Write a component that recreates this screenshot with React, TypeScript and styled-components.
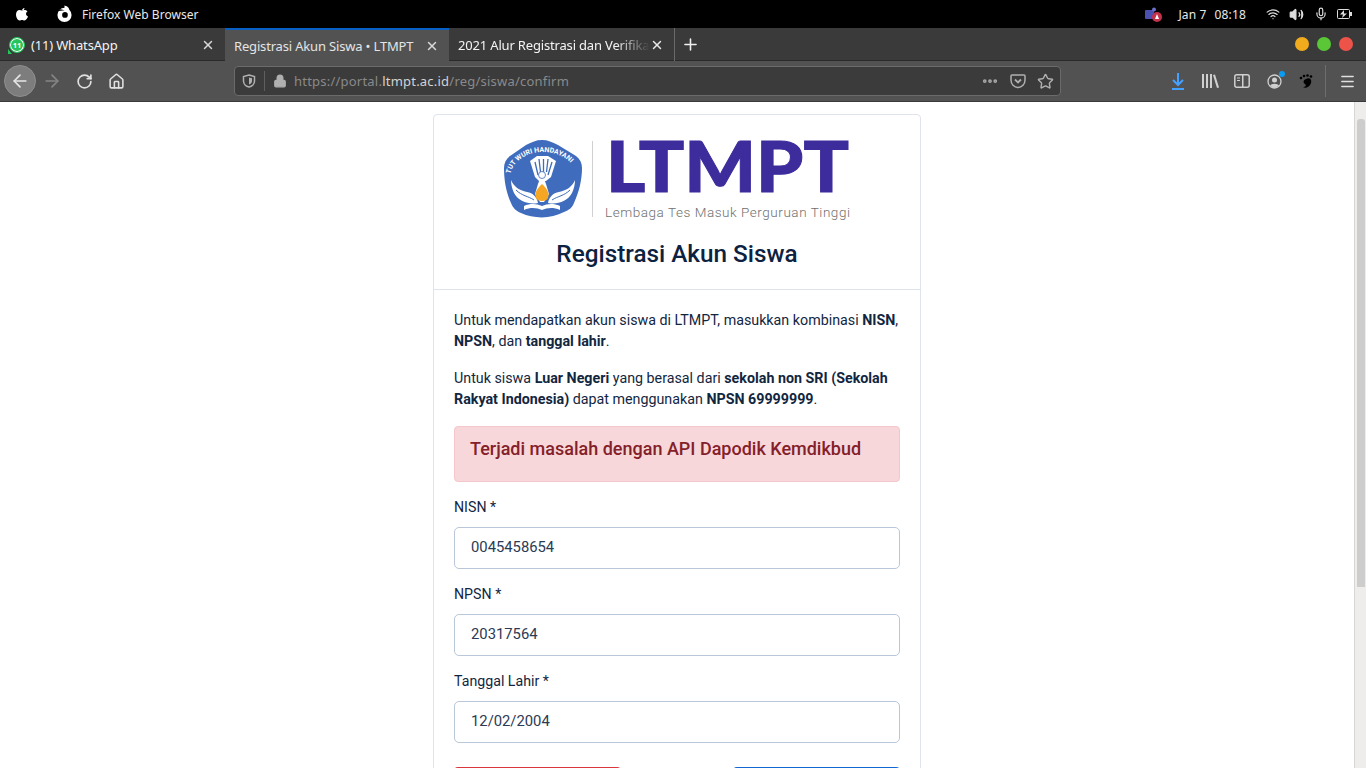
import styled, { createGlobalStyle } from "styled-components";
import {
  ArrowLeft,
  ArrowRight,
  Ellipsis,
  Home,
  Lock,
  Menu,
  Mic,
  Plus,
  RotateCw,
  Star,
  Volume2,
  Wifi,
  X,
} from "lucide-react";

const UI_FONT = `"Noto Sans", "Open Sans", sans-serif`;
const PAGE_FONT = `Roboto, "Liberation Sans", sans-serif`;

const GlobalStyle = createGlobalStyle`
  html, body {
    margin: 0;
    height: 100%;
    overflow: hidden;
    background: #fff;
  }
  * { box-sizing: border-box; }
`;

const Screen = styled.div`
  width: 1366px;
  height: 768px;
  display: flex;
  flex-direction: column;
  overflow: hidden;
`;

const SystemBar = styled.div`
  height: 28px;
  background: #000;
  color: #e8e8e8;
  display: flex;
  align-items: center;
  padding: 0 14px 0 16px;
  font: 12px ${UI_FONT};
  flex: none;
`;

const AppName = styled.span`
  margin-left: 9px;
  letter-spacing: 0.02px;
`;

const FirefoxMark = styled.svg`
  margin-left: 28px;
`;

const Tray = styled.div`
  margin-left: auto;
  display: flex;
  align-items: center;
`;

const Clock = styled.span`
  display: flex;
  gap: 8px;
  margin: 0 19.5px 0 16px;
  letter-spacing: 0.15px;
  white-space: nowrap;
`;

const TrayIcons = styled.div`
  display: flex;
  align-items: center;
  gap: 9.5px;
`;

const TabBar = styled.div`
  height: 33px;
  background: #3a3a3a;
  border-bottom: 1px solid #2a2a2a;
  display: flex;
  flex: none;
  color: #f0f0f0;
  font: 13px ${UI_FONT};
`;

const Tab = styled.div<{ $active?: boolean; $width: number }>`
  width: ${({ $width }) => $width}px;
  height: 33px;
  display: flex;
  align-items: center;
  padding: 0 10px 0 9px;
  background: ${({ $active }) => ($active ? "#525252" : "transparent")};
  border-top: ${({ $active }) => ($active ? "2px solid #0a5fc4" : "0")};
  color: ${({ $active }) => ($active ? "#e4e4e4" : "#f4f4f4")};
`;

const TabTitle = styled.span<{ $faded?: boolean }>`
  flex: 1;
  white-space: nowrap;
  overflow: hidden;
  letter-spacing: -0.17px;
  ${({ $faded }) =>
    $faded &&
    `-webkit-mask-image: linear-gradient(to right, #000 82%, transparent 100%);`}
`;

const WhatsAppIcon = styled.div`
  position: relative;
  width: 16px;
  height: 16px;
  margin-right: 6px;
  border-radius: 50%;
  background: #25c45c;
  border: 1.5px solid #25c45c;
  box-shadow: inset 0 0 0 1px #fff;
  display: flex;
  align-items: center;
  justify-content: center;
  color: #fff;
  font: 700 7.5px ${UI_FONT};
  &::after {
    content: "";
    position: absolute;
    left: -2px;
    bottom: -2px;
    border-top: 5px solid transparent;
    border-left: 4px solid #25c45c;
  }
`;

const TabDivider = styled.div`
  width: 1px;
  height: 33px;
  background: #6a6a6a;
`;

const NewTab = styled.div`
  width: 30px;
  height: 33px;
  display: flex;
  align-items: center;
  justify-content: center;
`;

const WindowButtons = styled.div`
  margin-left: auto;
  display: flex;
  align-items: center;
  gap: 8px;
  padding-right: 13px;
`;

const WindowDot = styled.span<{ $color: string }>`
  width: 14px;
  height: 14px;
  border-radius: 50%;
  background: ${({ $color }) => $color};
`;

const NavBar = styled.div`
  height: 41px;
  background: #525252;
  border-bottom: 1px solid #3a3a3a;
  display: flex;
  align-items: center;
  padding-left: 4px;
  flex: none;
`;

const BackButton = styled.div`
  width: 32px;
  height: 32px;
  border-radius: 50%;
  background: #7d7d7d;
  border: 1px solid #8e8e8e;
  display: flex;
  align-items: center;
  justify-content: center;
`;

const NavButton = styled.div`
  width: 32px;
  height: 32px;
  display: flex;
  align-items: center;
  justify-content: center;
  position: relative;
`;

const UrlBar = styled.div`
  width: 827px;
  height: 30px;
  margin-left: 102px;
  background: #3b3b3b;
  border: 1px solid #6b6b6b;
  border-radius: 4px;
  display: flex;
  align-items: center;
  padding: 0 6px 0 7px;
  font: 13px ${UI_FONT};
  color: #8a8a8a;
`;

const UrlSeparator = styled.span`
  width: 1px;
  height: 20px;
  background: #5f5f5f;
  margin: 0 8px;
`;

const UrlText = styled.span`
  margin-left: 7px;
  flex: 1;
  letter-spacing: 0.22px;
  b {
    font-weight: 400;
    color: #d4d4d4;
  }
`;

const UrlActions = styled.div`
  display: flex;
  align-items: center;
  gap: 11px;
`;

const ToolArea = styled.div`
  margin-left: 101px;
  display: flex;
  align-items: center;
`;

const ToolDivider = styled.span`
  width: 1px;
  height: 32px;
  background: #6e6e6e;
  margin: 0 5px 0 3px;
`;

const Notification = styled.span`
  position: absolute;
  top: 6px;
  right: 5px;
  width: 6px;
  height: 6px;
  border-radius: 50%;
  background: #0a9cf0;
`;

const Viewport = styled.div`
  flex: 1;
  min-height: 0;
  display: flex;
  background: #fff;
  overflow: hidden;
`;

const Page = styled.div`
  flex: 1;
  min-width: 0;
  display: flex;
  justify-content: center;
  padding: 12px 0 0 0;
`;

const Scrollbar = styled.div`
  width: 12px;
  background: #eeedec;
  border-left: 1px solid #d8d6d4;
  padding: 17px 1px 0 2px;
  flex: none;
`;

const ScrollThumb = styled.div`
  height: 468px;
  background: #cdcdcd;
  border-radius: 3px 3px 0 0;
`;

const Card = styled.div`
  width: 488px;
  height: max-content;
  background: #fff;
  border: 1px solid #dfe3ec;
  border-radius: 4px;
  color: #12263f;
  font: 14.28px/21px ${PAGE_FONT};
`;

const CardHeader = styled.div`
  height: 175px;
  border-bottom: 1px solid #dfe3ec;
  display: flex;
  flex-direction: column;
  align-items: center;
  padding-top: 25px;
`;

const Logo = styled.svg`
  display: block;
  margin-left: 1px;
`;

const CardTitle = styled.h1`
  margin: 18px 0 0;
  font: 500 24.3px/32px ${PAGE_FONT};
  color: #0d2240;
`;

const CardBody = styled.div`
  padding: 20px 20px 0;
`;

const Paragraph = styled.p`
  margin: 0 0 16px;
  color: #12263f;
  b {
    font-weight: 700;
  }
`;

const Alert = styled.div`
  height: 56px;
  margin: 16px 0 15px;
  padding: 10px 15px;
  background: #f8d7da;
  border: 1px solid #f5c6cb;
  border-radius: 4px;
  color: #842029;
  font: 500 18px/24px ${PAGE_FONT};
`;

const Field = styled.div`
  margin-bottom: 15px;
`;

const FieldLabel = styled.label`
  display: block;
  height: 21px;
  margin-bottom: 9px;
  color: #12263f;
  font-size: 14.2px;
`;

const FieldBox = styled.div`
  height: 42px;
  padding: 0 16px 2px;
  background: #fff;
  border: 1px solid #b9c7d8;
  border-radius: 5px;
  display: flex;
  align-items: center;
  color: #2b3a55;
  font-size: 14.8px;
`;

const Actions = styled.div`
  display: flex;
  justify-content: space-between;
  margin-top: 24px;
`;

const ActionButton = styled.div<{ $color: string }>`
  width: 167px;
  height: 40px;
  border-radius: 4px;
  background: ${({ $color }) => $color};
`;

function EmblemLogo() {
  const blue = "#3f6cbc";
  return (
    <Logo width="348" height="80" viewBox="0 0 348 80">
      {/* emblem */}
      <path
        d="M38 0 C44 0 48 2 54 5 L72 16 C76 19 78 23 78 28 C78 40 75 52 70 63 C68 68 65 70 60 72 C47 79 30 79 17 73 C12 71 9 68 7 63 C2 52 0 40 0 28 C0 23 2 19 6 16 L22 5 C28 2 32 0 38 0 Z"
        fill={blue}
      />
      <path d="M26 21 L33 16 L44 16 L52 21 L47 37 L42 41 L35 41 L31 37 Z" fill="#fff" />
      <path
        d="M31 22 L34 35 M35 19 L36.500 32 M39.500 19 L39.500 32 M44 19 L42.500 32 M48 22 L44 35"
        stroke={blue}
        strokeWidth="1.300"
      />
      <path
        d="M7 40 C10 47 15 50 23 52 C29 53 33 57 34 63 C25 65 14 61 10 53 C8 49 7 44 7 40 Z"
        fill="#fff"
      />
      <path
        d="M71 40 C68 47 63 50 55 52 C49 53 45 57 44 63 C53 65 64 61 68 53 C70 49 71 44 71 40 Z"
        fill="#fff"
      />
      <path d="M12 50 C18 56 24 56 30 60 M66 50 C60 56 54 56 48 60" fill="none" stroke={blue} strokeWidth="1" />
      <path d="M34 44 L38 33 L42 44 L45 54 L40 62 L36 62 L31 54 Z" fill="#fff" />
      <circle cx="38" cy="35" r="3.500" fill="#fff" stroke={blue} strokeWidth="0.800" />
      <path d="M38 44 C43 49 46 53 44 58 C43 62 33 62 32 58 C30 53 33 49 38 44 Z" fill="#f5a623" />
      <path d="M20 66 C27 63 33 64 38 66 C43 64 49 63 56 66 L56 70 C49 67 43 68 38 70 C33 68 27 67 20 70 Z" fill="#fff" />
      <path id="emblem-arc" d="M6 36 C11 4 67 4 73 36" fill="none" />
      <text fontFamily="Roboto, sans-serif" fontSize="7" fontWeight="700" fill="#fff">
        <textPath href="#emblem-arc" startOffset="2">
          TUT WURI HANDAYANI
        </textPath>
      </text>
      {/* divider */}
      <rect x="88" y="1" width="1" height="76" fill="#d0d0d0" />
      {/* wordmark */}
      <text
        x="102"
        y="52"
        fontFamily="Lato, Roboto, sans-serif"
        fontWeight="900"
        fontSize="71"
        fill="#3c2c9c"
        stroke="#3c2c9c"
        strokeWidth="1"
        textLength="243"
        lengthAdjust="spacingAndGlyphs"
      >
        LTMPT
      </text>
      <text
        x="101"
        y="77"
        fontFamily="Roboto, sans-serif"
        fontWeight="300"
        fontSize="13.500"
        fill="#6f6f6f"
        textLength="245"
        lengthAdjust="spacing"
      >
        Lembaga Tes Masuk Perguruan Tinggi
      </text>
    </Logo>
  );
}

export default function App() {
  return (
    <Screen>
      <GlobalStyle />
      <SystemBar>
        <svg width="12" height="14" viewBox="0 0 24 28" fill="#fff">
          <path d="M17 2c0 3-2.500 5.500-5 5.500C12 4.500 14 2.500 17 2zM20 14c0-3 2-4.500 3-5.500-2-2-4-2.500-6-2.500-2 0-3.500 1-5 1s-3-1-5-1C3 6 0 10 0 15c0 6 4 12 7 12 2 0 3-1 5-1s3 1 5 1c3 0 6-5 7-8-2-1-4-2.500-4-5z" />
        </svg>
        <FirefoxMark width="17" height="18" viewBox="0 0 18 18">
          <circle cx="9" cy="10" r="7.500" fill="#fff" />
          <circle cx="9.500" cy="10" r="3" fill="#000" />
          <path d="M1 6 L5 4 L9 5 Z" fill="#000" />
          <path d="M9 0 C13 1 14 3 14 5 L9 4 Z" fill="#fff" />
        </FirefoxMark>
        <AppName>Firefox Web Browser</AppName>
        <Tray>
          <svg width="17" height="15" viewBox="0 0 17 15">
            <rect x="0" y="3" width="9" height="9" rx="1" fill="#4a50b0" />
            <circle cx="9" cy="2.500" r="2" fill="#6a70c8" />
            <circle cx="12" cy="10" r="5" fill="#c4314b" />
            <path d="M10 12 L12 7 L14 12 Z" fill="#fff" />
          </svg>
          <Clock>
            <span>Jan 7</span>
            <span>08:18</span>
          </Clock>
          <TrayIcons>
            <Wifi size={14} color="#ddd" />
            <Volume2 size={15} color="#ddd" fill="#ddd" />
            <Mic size={14} color="#ddd" />
            <svg width="15" height="10" viewBox="0 0 15 10">
              <rect x="0.500" y="0.500" width="12" height="9" rx="1" fill="none" stroke="#ddd" />
              <rect x="13" y="3" width="2" height="4" fill="#ddd" />
              <path d="M7 1 L3 5.500 L6 5.500 L5 9 L10 4.500 L7 4.500 Z" fill="#ddd" />
            </svg>
          </TrayIcons>
        </Tray>
      </SystemBar>

      <TabBar>
        <Tab $width={225}>
          <WhatsAppIcon>11</WhatsAppIcon>
          <TabTitle>(11) WhatsApp</TabTitle>
          <X size={14} color="#d8d8d8" strokeWidth={2.500} />
        </Tab>
        <Tab $active $width={224}>
          <TabTitle>Registrasi Akun Siswa • LTMPT</TabTitle>
          <X size={14} color="#d8d8d8" strokeWidth={2.500} />
        </Tab>
        <Tab $width={225}>
          <TabTitle $faded>2021 Alur Registrasi dan Verifikasi</TabTitle>
          <X size={14} color="#e8e8e8" strokeWidth={2.500} />
        </Tab>
        <TabDivider />
        <NewTab>
          <Plus size={19} color="#f0f0f0" strokeWidth={2} />
        </NewTab>
        <WindowButtons>
          <WindowDot $color="#f0ac1c" />
          <WindowDot $color="#5ac736" />
          <WindowDot $color="#ee5349" />
        </WindowButtons>
      </TabBar>

      <NavBar>
        <BackButton>
          <ArrowLeft size={20} color="#e6e6e6" strokeWidth={2} />
        </BackButton>
        <NavButton>
          <ArrowRight size={20} color="#858585" strokeWidth={2} />
        </NavButton>
        <NavButton>
          <RotateCw size={17} color="#e0e0e0" strokeWidth={2.400} />
        </NavButton>
        <NavButton>
          <Home size={17} color="#e0e0e0" strokeWidth={2.200} />
        </NavButton>
        <UrlBar>
          <svg width="14" height="14" viewBox="0 0 14 14">
            <path
              d="M7 1 L12.500 2.500 V7 C12.500 10 10 12.500 7 13 C4 12.500 1.500 10 1.500 7 V2.500 Z"
              fill="none"
              stroke="#b0b0b0"
              strokeWidth="1.500"
            />
            <path d="M7 3.500 L10 4.300 V7 C10 8.800 8.700 10 7 10.500 Z" fill="#b0b0b0" />
          </svg>
          <UrlSeparator />
          <Lock size={14} color="#b0b0b0" fill="#b0b0b0" strokeWidth={2} />
          <UrlText>
            https://portal.<b>ltmpt.ac.id</b>/reg/siswa/confirm
          </UrlText>
          <UrlActions>
            <Ellipsis size={18} color="#a8a8a8" strokeWidth={3} />
            <svg width="16" height="16" viewBox="0 0 16 16">
              <path
                d="M2 2 H14 Q15 2 15 3 V7 C15 11 12 14.500 8 14.500 C4 14.500 1 11 1 7 V3 Q1 2 2 2 Z"
                fill="none"
                stroke="#b0b0b0"
                strokeWidth="1.500"
              />
              <path d="M5 6.500 L8 9.500 L11 6.500" fill="none" stroke="#b0b0b0" strokeWidth="1.800" />
            </svg>
            <Star size={17} color="#b0b0b0" strokeWidth={2} />
          </UrlActions>
        </UrlBar>
        <ToolArea>
          <NavButton>
            <svg width="14" height="17" viewBox="0 0 14 17" fill="none" stroke="#45a1ff" strokeWidth="2">
              <path d="M7 0 V12 M2 7 L7 12 L12 7" />
              <path d="M1 16 H13" />
            </svg>
          </NavButton>
          <NavButton>
            <svg width="17" height="14" viewBox="0 0 17 14" fill="#d0d0d0">
              <rect x="0" y="0" width="2" height="14" />
              <rect x="4" y="0" width="2" height="14" />
              <rect x="8" y="0" width="2" height="14" />
              <path d="M11 1 L13 0.500 L17 13.500 L15 14 Z" />
            </svg>
          </NavButton>
          <NavButton>
            <svg width="16" height="14" viewBox="0 0 16 14">
              <rect x="0.800" y="0.800" width="14.400" height="12.400" rx="2" fill="none" stroke="#d0d0d0" strokeWidth="1.500" />
              <rect x="8" y="1" width="1.500" height="12" fill="#d0d0d0" />
              <path d="M3 4 H6 M3 6.500 H6" stroke="#d0d0d0" />
            </svg>
          </NavButton>
          <NavButton>
            <svg width="15" height="15" viewBox="0 0 15 15">
              <circle cx="7.500" cy="7.500" r="6.500" fill="none" stroke="#d0d0d0" strokeWidth="1.300" />
              <circle cx="7.500" cy="6" r="2.500" fill="#d0d0d0" />
              <path d="M3 12 C4 9 11 9 12 12 L7.500 14 Z" fill="#d0d0d0" />
            </svg>
            <Notification />
          </NavButton>
          <NavButton>
            <svg width="14" height="15" viewBox="0 0 14 15">
              <path d="M7 5 C11 3 13 6 12 9 C11 13 6 15 4 13 C6 13 8 12 6 10 C4 9 4 6 7 5 Z" fill="#000" />
              <circle cx="2" cy="4" r="1.300" fill="#000" />
              <circle cx="5" cy="2" r="1.300" fill="#000" />
              <circle cx="8.500" cy="1.500" r="1.300" fill="#000" />
              <circle cx="12" cy="2.500" r="1.300" fill="#000" />
            </svg>
          </NavButton>
          <ToolDivider />
          <NavButton>
            <Menu size={17} color="#e0e0e0" strokeWidth={2} />
          </NavButton>
        </ToolArea>
      </NavBar>

      <Viewport>
        <Page>
          <Card>
            <CardHeader>
              <EmblemLogo />
              <CardTitle>Registrasi Akun Siswa</CardTitle>
            </CardHeader>
            <CardBody>
              <Paragraph>
                Untuk mendapatkan akun siswa di LTMPT, masukkan kombinasi{" "}
                <b>NISN</b>, <b>NPSN</b>, dan <b>tanggal lahir</b>.
              </Paragraph>
              <Paragraph>
                Untuk siswa <b>Luar Negeri</b> yang berasal dari{" "}
                <b>sekolah non SRI (Sekolah Rakyat Indonesia)</b> dapat
                menggunakan <b>NPSN 69999999</b>.
              </Paragraph>
              <Alert>Terjadi masalah dengan API Dapodik Kemdikbud</Alert>
              <Field>
                <FieldLabel>NISN *</FieldLabel>
                <FieldBox>0045458654</FieldBox>
              </Field>
              <Field>
                <FieldLabel>NPSN *</FieldLabel>
                <FieldBox>20317564</FieldBox>
              </Field>
              <Field>
                <FieldLabel>Tanggal Lahir *</FieldLabel>
                <FieldBox>12/02/2004</FieldBox>
              </Field>
              <Actions>
                <ActionButton $color="#d9363e" />
                <ActionButton $color="#1266d6" />
              </Actions>
            </CardBody>
          </Card>
        </Page>
        <Scrollbar>
          <ScrollThumb />
        </Scrollbar>
      </Viewport>
    </Screen>
  );
}
